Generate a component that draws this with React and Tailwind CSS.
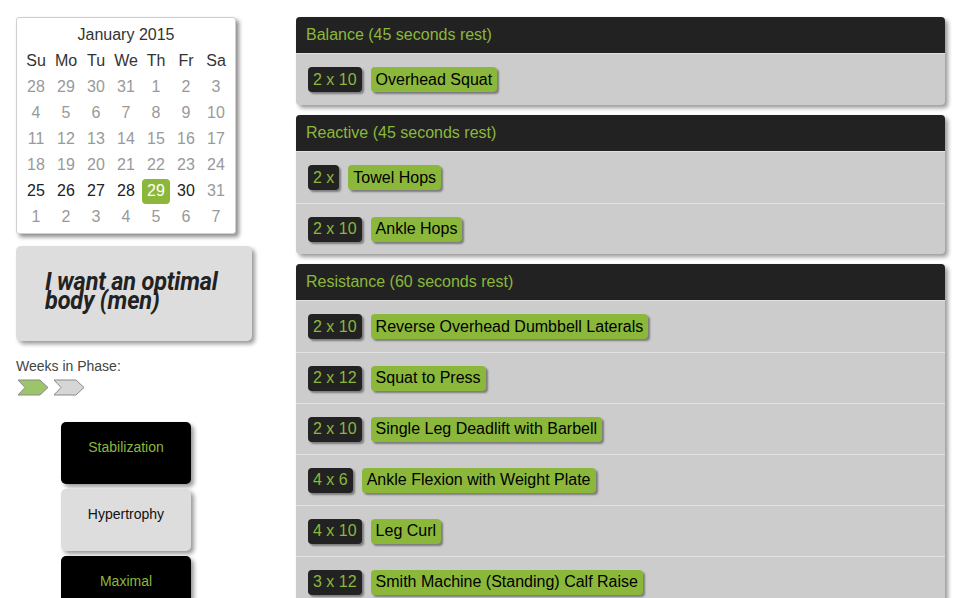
import React from 'react';

const weeks = [
  [28, 29, 30, 31, 1, 2, 3],
  [4, 5, 6, 7, 8, 9, 10],
  [11, 12, 13, 14, 15, 16, 17],
  [18, 19, 20, 21, 22, 23, 24],
  [25, 26, 27, 28, 29, 30, 31],
  [1, 2, 3, 4, 5, 6, 7],
];

const sections = [
  {
    title: 'Balance (45 seconds rest)',
    items: [{ sets: '2 x 10', name: 'Overhead Squat' }],
  },
  {
    title: 'Reactive (45 seconds rest)',
    items: [
      { sets: '2 x', name: 'Towel Hops' },
      { sets: '2 x 10', name: 'Ankle Hops' },
    ],
  },
  {
    title: 'Resistance (60 seconds rest)',
    items: [
      { sets: '2 x 10', name: 'Reverse Overhead Dumbbell Laterals' },
      { sets: '2 x 12', name: 'Squat to Press' },
      { sets: '2 x 10', name: 'Single Leg Deadlift with Barbell' },
      { sets: '4 x 6', name: 'Ankle Flexion with Weight Plate' },
      { sets: '4 x 10', name: 'Leg Curl' },
      { sets: '3 x 12', name: 'Smith Machine (Standing) Calf Raise' },
    ],
  },
];

const Calendar = () => (
  <div className="w-[220px] shrink-0 bg-white border border-[#cfcfcf] rounded-[3px] shadow-[3px_3px_4px_rgba(0,0,0,0.45)] px-[4px] pt-[4px] pb-[3px] text-[16px]">
    <div className="h-[26px] flex items-center justify-center text-[#333]">January 2015</div>
    <div className="grid grid-cols-7">
      {['Su', 'Mo', 'Tu', 'We', 'Th', 'Fr', 'Sa'].map((d) => (
        <div key={d} className="h-[26px] flex items-center justify-center text-[#333]">{d}</div>
      ))}
      {weeks.map((week, wi) =>
        week.map((day, di) => {
          const active = wi === 4 && day >= 25 && day <= 30;
          const selected = wi === 4 && day === 29;
          return (
            <div key={`${wi}-${di}`} className="h-[26px] flex items-center justify-center">
              {selected ? (
                <span className="w-[28px] h-[25px] rounded-[4px] bg-[#8bb83b] text-white flex items-center justify-center">
                  {day}
                </span>
              ) : (
                <span className={active ? 'text-[#222]' : 'text-[#999]'}>{day}</span>
              )}
            </div>
          );
        })
      )}
    </div>
  </div>
);

const Chevron = ({ fill }) => (
  <svg width="32" height="17" viewBox="0 0 32 17">
    <polygon points="1,1 23,1 31,8.5 23,16 1,16 8,8.5" fill={fill} stroke="#8a8a8a" strokeWidth="1" />
  </svg>
);

const PhaseButton = ({ label, active }) => (
  <div
    className={`w-[130px] h-[62px] shrink-0 rounded-[5px] pt-[17px] text-center text-[14px] leading-[16px] shadow-[3px_3px_4px_rgba(0,0,0,0.4)] ${
      active ? 'bg-[#dddddd] text-[#111]' : 'bg-black text-[#8bb83b]'
    }`}
  >
    {label}
  </div>
);

const Section = ({ title, items }) => (
  <div className="shrink-0 rounded-[4px] overflow-hidden bg-[#cccccc] shadow-[3px_3px_4px_rgba(0,0,0,0.4)]">
    <div className="h-[37px] bg-[#222222] border-b border-[#e0e0e0] flex items-center px-[10px] text-[16px] text-[#8bb83b]">
      {title}
    </div>
    {items.map((item, i) => (
      <div
        key={i}
        className={`h-[51px] flex items-center px-[12px] gap-[9px] ${i > 0 ? 'border-t border-[#e2e2e2]' : ''}`}
      >
        <span className="h-[25px] px-[5px] rounded-[4px] bg-[#222222] text-[#8bb83b] text-[16px] flex items-center shadow-[2px_2px_2px_rgba(0,0,0,0.4)]">
          {item.sets}
        </span>
        <span className="h-[25px] px-[5px] rounded-[4px] bg-[#8bb83b] text-black text-[16px] flex items-center shadow-[2px_2px_2px_rgba(0,0,0,0.4)]">
          {item.name}
        </span>
      </div>
    ))}
  </div>
);

export default function App() {
  return (
    <div className="w-[971px] h-[598px] overflow-hidden bg-white flex font-['Liberation_Sans',Arial,sans-serif]">
      {/* Sidebar */}
      <div className="w-[296px] shrink-0 pl-[16px] pt-[17px] flex flex-col">
        <Calendar />
        <div className="mt-[12px] shrink-0 w-[236px] h-[95px] bg-[#dddddd] rounded-[5px] shadow-[3px_3px_4px_rgba(0,0,0,0.4)] pl-[29px] pt-[26px]">
          <div className="font-['Roboto',sans-serif] italic font-bold text-[25px] leading-[19px] tracking-[-0.2px] text-[#222] scale-x-[0.94] origin-left w-[200px]">
            I want an optimal body (men)
          </div>
        </div>
        <div className="mt-[17px] shrink-0 text-[14px] leading-[16px] text-[#444]">Weeks in Phase:</div>
        <div className="mt-[5px] shrink-0 flex gap-[4px] ml-[1px]">
          <Chevron fill="#9cc469" />
          <Chevron fill="#d6d6d6" />
        </div>
        <div className="mt-[26px] ml-[45px] shrink-0 flex flex-col gap-[5px]">
          <PhaseButton label="Stabilization" />
          <PhaseButton label="Hypertrophy" active />
          <PhaseButton label="Maximal" />
        </div>
      </div>

      {/* Workout */}
      <div className="w-[649px] pt-[17px] flex flex-col gap-[10px]">
        {sections.map((s) => (
          <Section key={s.title} title={s.title} items={s.items} />
        ))}
      </div>
    </div>
  );
}
